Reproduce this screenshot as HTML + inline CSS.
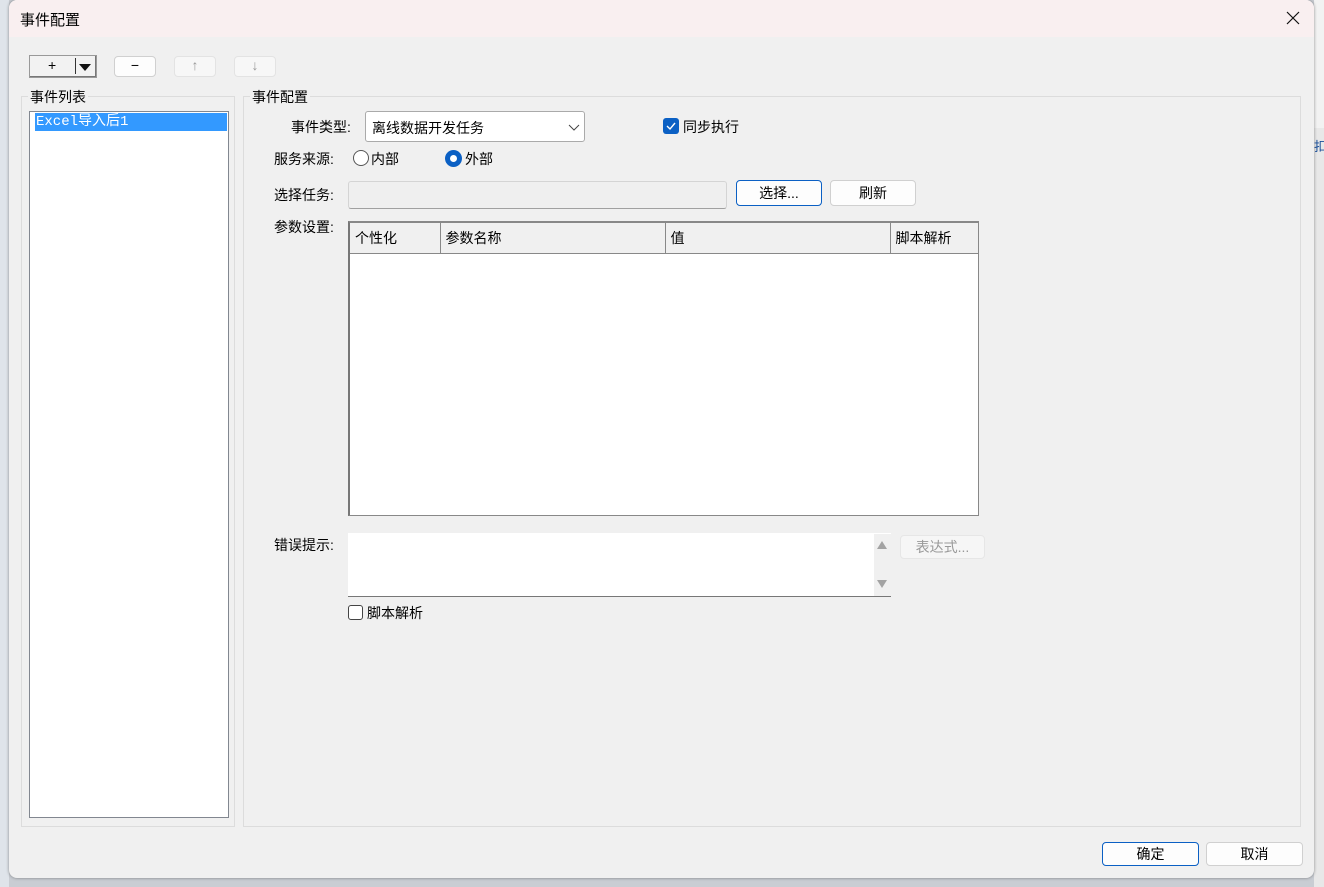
<!DOCTYPE html>
<html><head><meta charset="utf-8"><style>
*{box-sizing:border-box;margin:0;padding:0}
body{width:1324px;height:887px;background:#c9cdd3;position:relative;overflow:hidden;font-family:"Liberation Sans","Noto Sans CJK SC",sans-serif;font-size:14px;color:#000}
.a{position:absolute}
.dlg{left:9px;top:0;width:1305px;height:878px;background:#f0f0f0;border-radius:8px;overflow:hidden;box-shadow:0 0 3px rgba(0,0,0,.4)}
.tb{left:0;top:0;width:100%;height:37px;background:#f9eff0}
.btn{position:absolute;background:#fdfdfd;border:1px solid #d0d0d0;border-radius:4px;text-align:center;font-size:14px}
.lbl{position:absolute;font-size:14px;white-space:nowrap}
.grp{position:absolute;border:1px solid #dcdcdc}
.gt{position:absolute;background:#f0f0f0;padding:0 2px;font-size:14px;top:-10px;left:6px}
th{font-weight:normal;text-align:left;padding-left:5px;border:1px solid #888;border-top:none;background:#f0f0f0;height:30px;font-size:14px}
</style></head><body>
<div class="a" style="left:0;top:0;width:9px;height:887px;background:#dfe4ea"></div>
<div class="a" style="left:1314px;top:128px;width:10px;height:759px;background:#e8e8e8"></div>
<div class="a" style="left:1314px;top:0;width:10px;height:128px;background:#f2f2f2"></div>
<div class="a" style="left:1314px;top:136px;font-size:13px;color:#1a4f9a">扣</div>
<div class="a dlg">
 <div class="a tb"></div>
 <div class="lbl" style="left:11px;top:9px;font-size:15px">事件配置</div>
 <svg class="a" style="left:1277px;top:11px" width="14" height="14"><path d="M1 1L13 13M13 1L1 13" stroke="#111" stroke-width="1.2"/></svg>
 <div class="btn" style="left:20px;top:55px;width:68px;height:23px;border-radius:0;border-color:#999;background:#f2f2f2;box-shadow:inset -1px -1px 0 #777"><span style="position:absolute;left:18px;top:1px">+</span><span style="position:absolute;left:45px;top:2px;width:1px;height:16px;background:#333"></span><span style="position:absolute;left:49px;top:8px;border-left:6px solid transparent;border-right:6px solid transparent;border-top:7px solid #111"></span></div>
 <div class="btn" style="left:105px;top:56px;width:42px;height:21px">−</div>
 <div class="btn" style="left:165px;top:56px;width:42px;height:21px;color:#999;border-color:#e3e3e3;background:#f7f7f7">↑</div>
 <div class="btn" style="left:225px;top:56px;width:42px;height:21px;color:#999;border-color:#e3e3e3;background:#f7f7f7">↓</div>
 <div class="grp" style="left:12px;top:96px;width:214px;height:731px"><div class="gt">事件列表</div></div>
 <div class="a" style="left:20px;top:111px;width:200px;height:707px;background:#fff;border:1px solid #828790"></div>
 <div class="a" style="left:26px;top:113px;width:192px;height:18px;background:#3399ff;color:#fff;font-family:'Liberation Mono','Noto Sans CJK SC',monospace;font-size:14px;line-height:18px;padding-left:1px">Excel导入后1</div>
 <div class="grp" style="left:234px;top:96px;width:1058px;height:731px"><div class="gt">事件配置</div></div>
 <div class="lbl" style="left:282px;top:117px">事件类型:</div>
 <div class="a" style="left:356px;top:111px;width:220px;height:31px;background:#fff;border:1px solid #aaa;border-radius:3px"><span style="position:absolute;left:6px;top:6px">离线数据开发任务</span><svg style="position:absolute;left:202px;top:12px" width="12" height="8"><path d="M1 1l5 5 5-5" fill="none" stroke="#444"/></svg></div>
 <div class="a" style="left:654px;top:118px;width:16px;height:16px;background:#0b60c4;border-radius:3px"><svg width="16" height="16"><path d="M4 8l3 3 5-6" fill="none" stroke="#fff" stroke-width="1.4"/></svg></div>
 <div class="lbl" style="left:674px;top:117px">同步执行</div>
 <div class="lbl" style="left:265px;top:149px">服务来源:</div>
 <div class="a" style="left:344px;top:150px;width:16px;height:16px;border:1px solid #555;border-radius:50%;background:#fff"></div>
 <div class="lbl" style="left:362px;top:149px">内部</div>
 <div class="a" style="left:436px;top:150px;width:17px;height:17px;border-radius:50%;background:#0b60c4"><div class="a" style="left:5px;top:5px;width:7px;height:7px;border-radius:50%;background:#fff"></div></div>
 <div class="lbl" style="left:456px;top:149px">外部</div>
 <div class="lbl" style="left:265px;top:185px">选择任务:</div>
 <div class="a" style="left:339px;top:181px;width:379px;height:28px;background:#efefef;border:1px solid #d4d4d4;border-bottom-color:#a0a0a0;border-radius:3px"></div>
 <div class="btn" style="left:727px;top:180px;width:86px;height:26px;border-color:#0b60c4;line-height:24px">选择...</div>
 <div class="btn" style="left:821px;top:180px;width:86px;height:26px;line-height:24px">刷新</div>
 <div class="lbl" style="left:265px;top:217px">参数设置:</div>
 <div class="a" style="left:339px;top:221px;width:631px;height:295px;background:#fff;border:1px solid #888;border-left:2px solid #777;border-top:2px solid #888">
  <table style="border-collapse:collapse;width:629px"><tr><th style="width:90px;border-left:none">个性化</th><th style="width:225px">参数名称</th><th style="width:225px">值</th><th>脚本解析</th></tr></table>
 </div>
 <div class="lbl" style="left:265px;top:535px">错误提示:</div>
 <div class="a" style="left:339px;top:533px;width:543px;height:64px;background:#fff;border-bottom:1px solid #777"><div class="a" style="right:0;top:1px;width:17px;height:62px;background:#f0f0f0"></div><div class="a" style="right:4px;top:8px;border-left:5px solid transparent;border-right:5px solid transparent;border-bottom:8px solid #a3a3a3"></div><div class="a" style="right:4px;top:47px;border-left:5px solid transparent;border-right:5px solid transparent;border-top:8px solid #a3a3a3"></div></div>
 <div class="btn" style="left:891px;top:535px;width:85px;height:24px;color:#999;border-color:#e6e6e6;background:#f6f6f6;line-height:22px">表达式...</div>
 <div class="a" style="left:339px;top:605px;width:15px;height:15px;border:1px solid #444;border-radius:3px;background:#fff"></div>
 <div class="lbl" style="left:358px;top:603px">脚本解析</div>
 <div class="btn" style="left:1093px;top:842px;width:97px;height:24px;border-color:#0b60c4;line-height:22px">确定</div>
 <div class="btn" style="left:1197px;top:842px;width:97px;height:24px;line-height:22px">取消</div>
</div>
</body></html>
